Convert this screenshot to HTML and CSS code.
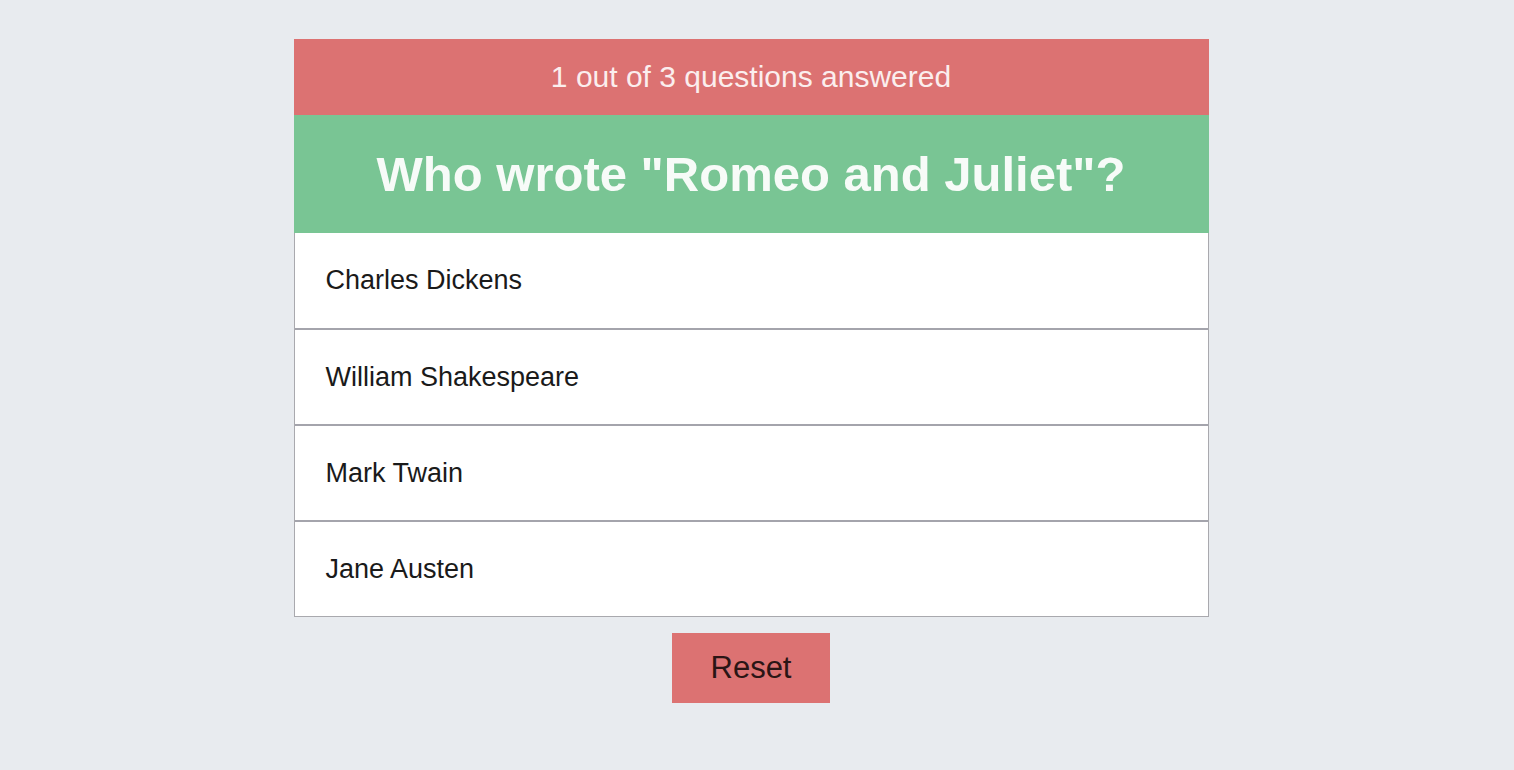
FILE: index.html
```html
<!DOCTYPE html>
<html>
<head>
<meta charset="utf-8">
<link rel="stylesheet" href="styles.css">
</head>
<body>
<div class="page">
  <div class="quiz">
    <div class="progress">1 out of 3 questions answered</div>
    <div class="question">Who wrote "Romeo and Juliet"?</div>
    <ul class="options">
      <li class="option">Charles Dickens</li>
      <li class="option">William Shakespeare</li>
      <li class="option">Mark Twain</li>
      <li class="option">Jane Austen</li>
    </ul>
  </div>
  <button class="reset">Reset</button>
</div>
</body>
</html>
```
FILE: styles.css
```css
html, body {
  margin: 0;
  padding: 0;
}
body {
  background: #e8ebef;
  font-family: "Liberation Sans", Arial, sans-serif;
  width: 1514px;
  height: 770px;
  overflow: hidden;
}
.page {
  display: flex;
  flex-direction: column;
  align-items: center;
  padding-top: 39px;
  padding-right: 12px;
}
.quiz {
  width: 915px;
  box-sizing: border-box;
}
.progress {
  background: #dc7272;
  color: #fbeeee;
  height: 76px;
  display: flex;
  align-items: center;
  justify-content: center;
  font-size: 30px;
}
.question {
  background: #79c594;
  color: #f7fbf8;
  height: 118px;
  display: flex;
  align-items: center;
  justify-content: center;
  font-size: 49px;
  font-weight: bold;
}
.options {
  list-style: none;
  margin: 0;
  padding: 0;
  background: #fff;
  border: 1px solid #a9a9ae;
  border-top: none;
}
.option {
  height: 94px;
  display: flex;
  align-items: center;
  padding-left: 31px;
  font-size: 27px;
  color: #1a1a1a;
  border-top: 2px solid #a4a4ac;
}
.option:first-child {
  border-top: none;
  height: 95px;
}
.reset {
  margin-top: 16px;
  width: 158px;
  height: 70px;
  background: #dc7272;
  border: none;
  font-family: "Liberation Sans", Arial, sans-serif;
  font-size: 31px;
  color: #2a1515;
  padding: 0;
}
```
